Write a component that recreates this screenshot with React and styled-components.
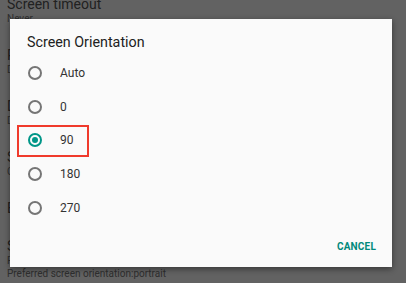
import React from 'react';
import styled, { createGlobalStyle } from 'styled-components';

const GlobalStyle = createGlobalStyle`
  html, body {
    margin: 0;
    padding: 0;
    width: 406px;
    height: 283px;
    overflow: hidden;
    background: #f4f4f4;
    font-family: Roboto, "Noto Sans", "Liberation Sans", sans-serif;
  }
`;

const Screen = styled.div`
  position: relative;
  width: 406px;
  height: 283px;
  overflow: hidden;
`;

const SettingsList = styled.div`
  display: flex;
  flex-direction: column;
  margin-top: -15px;
`;

const Setting = styled.div`
  display: flex;
  flex-direction: column;
  padding: 11px 7px;
`;

const SettingTitle = styled.div`
  font-size: 14px;
  line-height: 16px;
  color: #555;
`;

const SettingSummary = styled.div`
  font-size: 10px;
  line-height: 13px;
  color: #757575;
`;

const Scrim = styled.div`
  position: absolute;
  inset: 0;
  background: rgba(0, 0, 0, 0.6);
`;

const Dialog = styled.div`
  position: absolute;
  left: 10px;
  top: 19px;
  width: 382px;
  height: 248px;
  box-sizing: border-box;
  background: #fafafa;
  box-shadow: 0 2px 6px rgba(0, 0, 0, 0.45);
  padding-top: 13px;
  display: flex;
  flex-direction: column;
`;

const DialogTitle = styled.div`
  padding-left: 17px;
  font-size: 14.3px;
  line-height: 20px;
  color: #212121;
  margin-bottom: 4px;
`;

const Options = styled.div`
  display: flex;
  flex-direction: column;
`;

const Option = styled.div`
  position: relative;
  height: 33.75px;
  display: flex;
  align-items: center;
  padding-left: 18px;
  gap: 18px;
`;

const Radio = styled.span`
  box-sizing: border-box;
  width: 14px;
  height: 14px;
  border-radius: 50%;
  border: 2px solid ${p => (p.$checked ? '#009688' : '#757575')};
  display: flex;
  align-items: center;
  justify-content: center;
  &::after {
    content: '';
    display: ${p => (p.$checked ? 'block' : 'none')};
    width: 6px;
    height: 6px;
    border-radius: 50%;
    background: #009688;
  }
`;

const OptionLabel = styled.span`
  font-size: 12px;
  color: #333;
`;

const Highlight = styled.div`
  position: absolute;
  left: 7px;
  top: 1px;
  width: 72px;
  height: 32px;
  box-sizing: border-box;
  border: 2px solid #f03a2c;
`;

const Actions = styled.div`
  display: flex;
  justify-content: flex-end;
  padding: 8px 16px 0 0;
`;

const TextButton = styled.span`
  height: 28px;
  line-height: 28px;
  font-size: 10px;
  font-weight: 700;
  color: #00897b;
  letter-spacing: 0.2px;
`;

const settings = [
  { title: 'Screen timeout', summary: ['Never'] },
  { title: 'Power button ends call', summary: ['Disabled'] },
  { title: 'Display size', summary: ['Default'] },
  { title: 'Screen saver', summary: ['Clock'] },
  { title: 'Enable auto rotation', summary: [] },
  { title: 'Screen orientation', summary: ['Portrait', 'Preferred screen orientation:portrait'] },
];

const options = ['Auto', '0', '90', '180', '270'];

export default function App() {
  return (
    <Screen>
      <GlobalStyle />
      <SettingsList>
        {settings.map(s => (
          <Setting key={s.title}>
            <SettingTitle>{s.title}</SettingTitle>
            {s.summary.map(line => (
              <SettingSummary key={line}>{line}</SettingSummary>
            ))}
          </Setting>
        ))}
      </SettingsList>
      <Scrim />
      <Dialog>
        <DialogTitle>Screen Orientation</DialogTitle>
        <Options>
          {options.map(o => (
            <Option key={o}>
              <Radio $checked={o === '90'} />
              <OptionLabel>{o}</OptionLabel>
              {o === '90' && <Highlight />}
            </Option>
          ))}
        </Options>
        <Actions>
          <TextButton>CANCEL</TextButton>
        </Actions>
      </Dialog>
    </Screen>
  );
}
